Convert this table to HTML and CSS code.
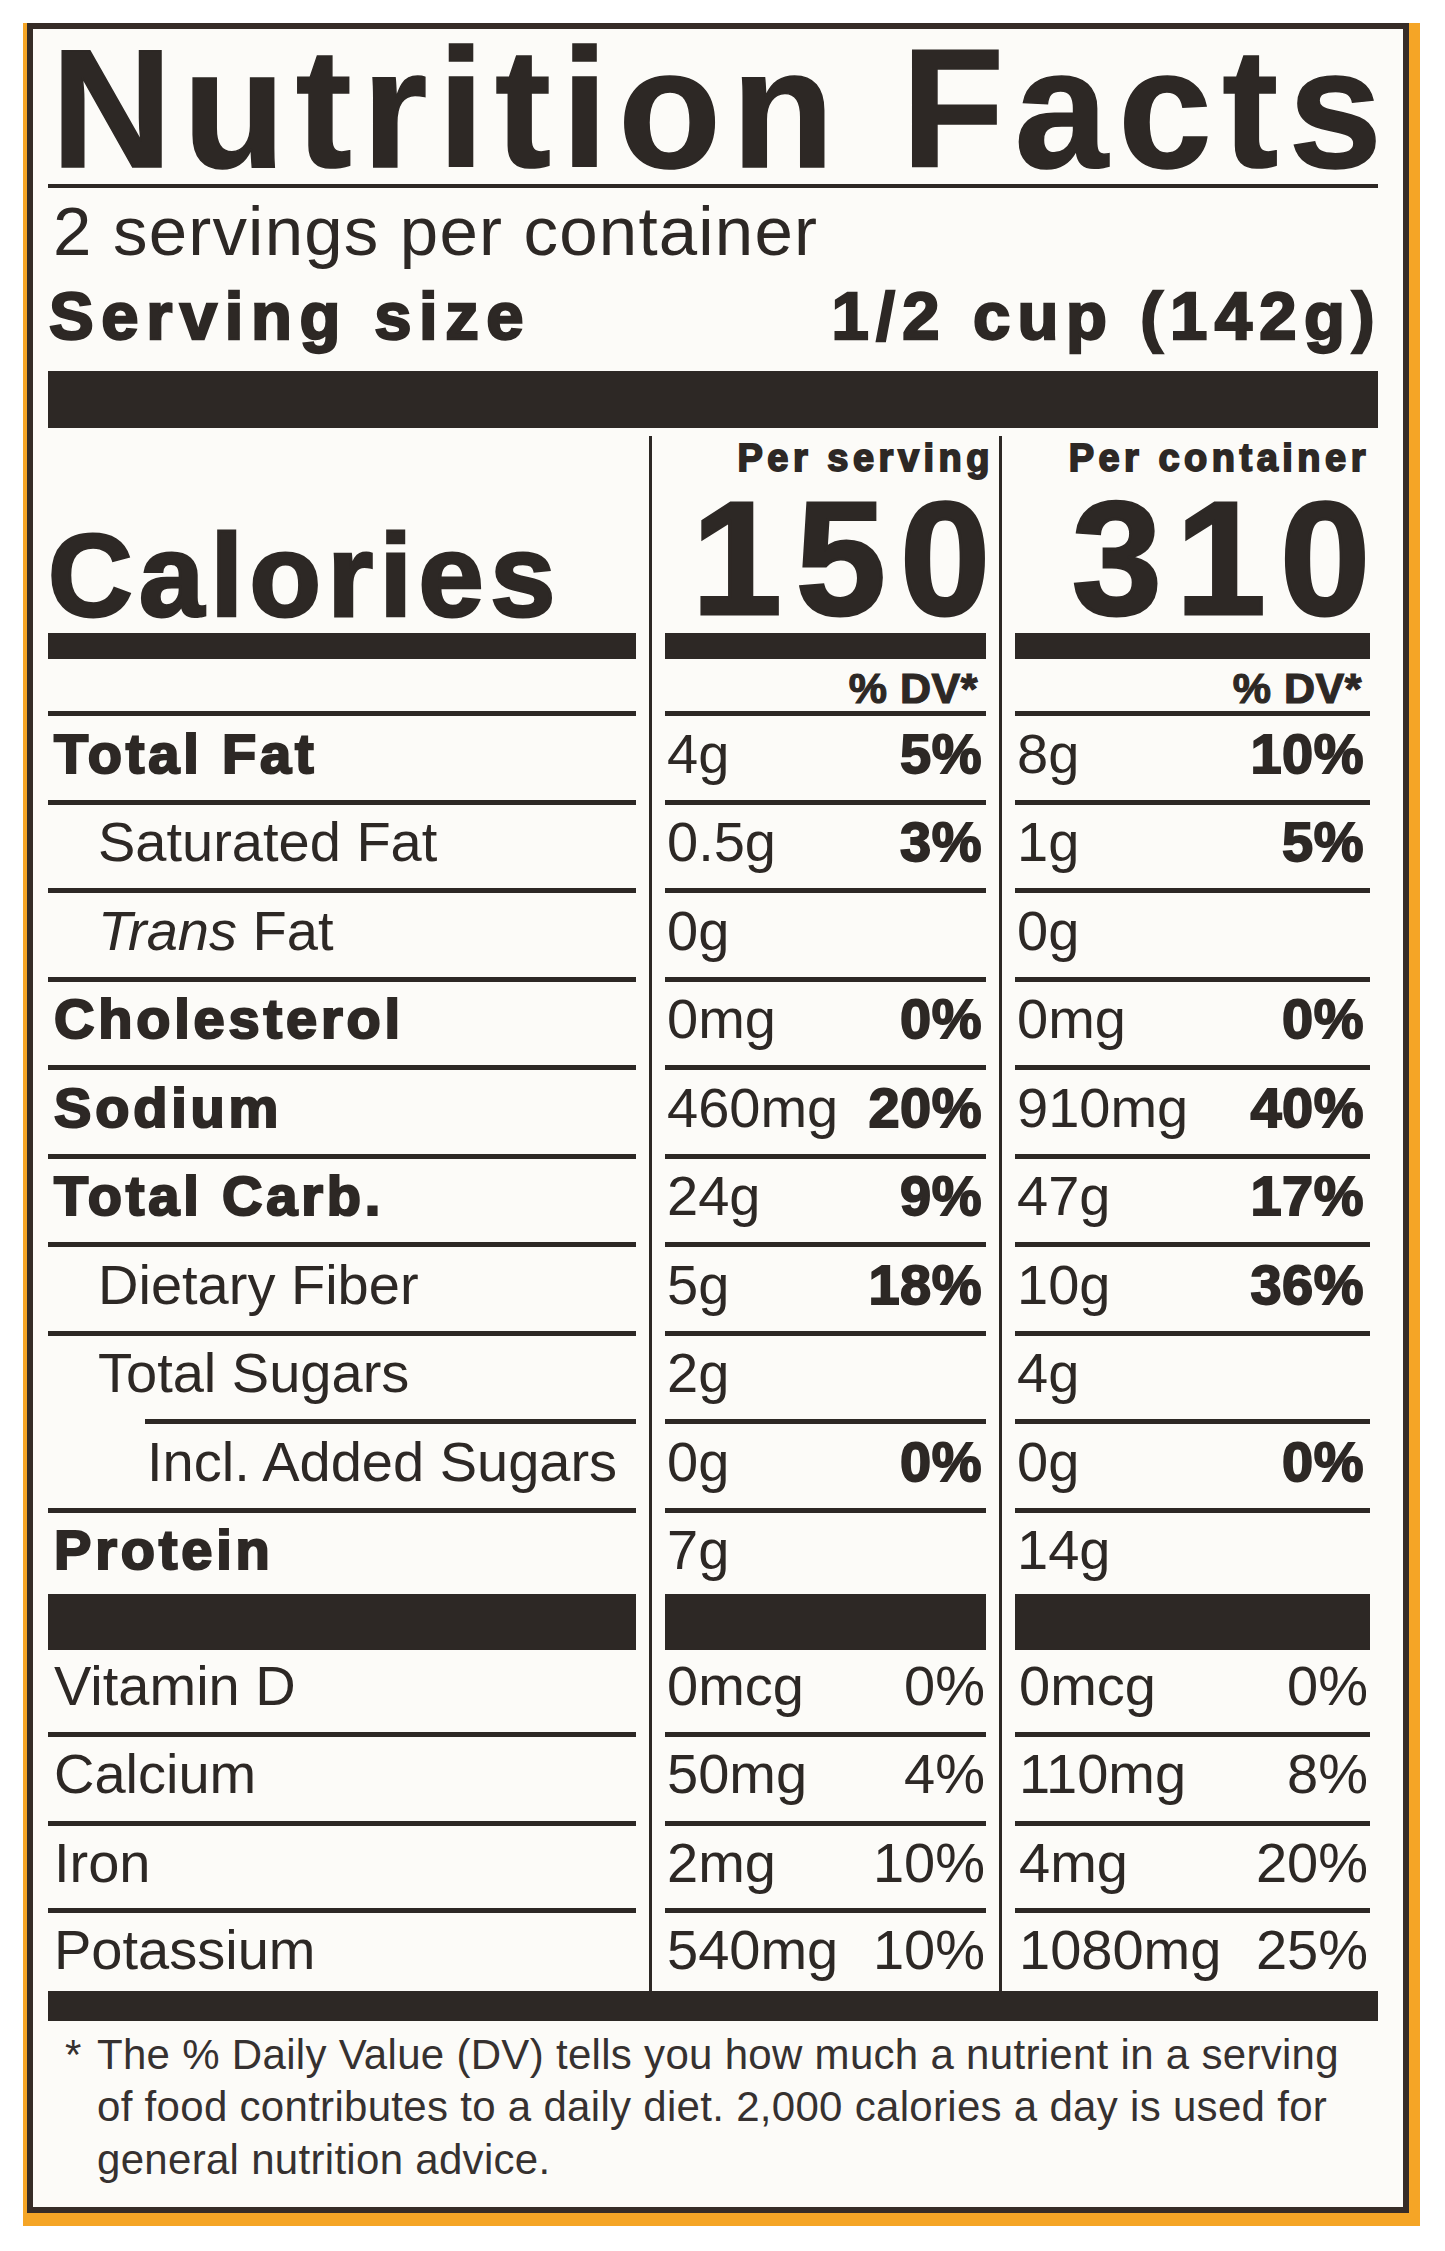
FILE: index.html
```html
<!DOCTYPE html>
<html lang="en">
<head>
<meta charset="utf-8">
<title>Nutrition Facts</title>
<link rel="stylesheet" href="styles.css">
</head>
<body>
<div class="bag">
  <div class="label">
    <h1 class="title">Nutrition Facts</h1>
    <p class="servings">2 servings per container</p>
    <div class="serving-size"><span class="ss-label">Serving size</span><span class="ss-value">1/2 cup (142g)</span></div>
    <div class="bar-top"></div>

    <div class="facts">
      <div class="divider d1"></div>
      <div class="divider d2"></div>

      <div class="c1 head-cal"><span class="calories">Calories</span></div>
      <div class="c2 head"><span class="per">Per serving</span><span class="kcal">150</span></div>
      <div class="c3 head"><span class="per">Per container</span><span class="kcal">310</span></div>

      <div class="c1 calbar"></div>
      <div class="c2 calbar"></div>
      <div class="c3 calbar"></div>

      <div class="c1 dvrow"></div>
      <div class="c2 dvrow"><span class="dv">% DV*</span></div>
      <div class="c3 dvrow"><span class="dv">% DV*</span></div>

      <div class="c1 row lab bold">Total Fat</div>
      <div class="c2 row val"><span>4g</span><b>5%</b></div>
      <div class="c3 row val"><span>8g</span><b>10%</b></div>

      <div class="c1 row lab sub">Saturated Fat</div>
      <div class="c2 row val"><span>0.5g</span><b>3%</b></div>
      <div class="c3 row val"><span>1g</span><b>5%</b></div>

      <div class="c1 row lab sub"><i>Trans</i> Fat</div>
      <div class="c2 row val"><span>0g</span></div>
      <div class="c3 row val"><span>0g</span></div>

      <div class="c1 row lab bold">Cholesterol</div>
      <div class="c2 row val"><span>0mg</span><b>0%</b></div>
      <div class="c3 row val"><span>0mg</span><b>0%</b></div>

      <div class="c1 row lab bold">Sodium</div>
      <div class="c2 row val"><span>460mg</span><b>20%</b></div>
      <div class="c3 row val"><span>910mg</span><b>40%</b></div>

      <div class="c1 row lab bold">Total Carb.</div>
      <div class="c2 row val"><span>24g</span><b>9%</b></div>
      <div class="c3 row val"><span>47g</span><b>17%</b></div>

      <div class="c1 row lab sub">Dietary Fiber</div>
      <div class="c2 row val"><span>5g</span><b>18%</b></div>
      <div class="c3 row val"><span>10g</span><b>36%</b></div>

      <div class="c1 row lab sub">Total Sugars</div>
      <div class="c2 row val"><span>2g</span></div>
      <div class="c3 row val"><span>4g</span></div>

      <div class="c1 row lab incl">Incl. Added Sugars</div>
      <div class="c2 row val"><span>0g</span><b>0%</b></div>
      <div class="c3 row val"><span>0g</span><b>0%</b></div>

      <div class="c1 row lab bold protein">Protein</div>
      <div class="c2 row val protein"><span>7g</span></div>
      <div class="c3 row val protein"><span>14g</span></div>

      <div class="c1 vitbar"></div>
      <div class="c2 vitbar"></div>
      <div class="c3 vitbar"></div>

      <div class="c1 row lab first r-vd">Vitamin D</div>
      <div class="c2 row val low first r-vd"><span>0mcg</span><span>0%</span></div>
      <div class="c3 row val low first r-vd"><span>0mcg</span><span>0%</span></div>

      <div class="c1 row lab r-ca">Calcium</div>
      <div class="c2 row val low r-ca"><span>50mg</span><span>4%</span></div>
      <div class="c3 row val low r-ca"><span>110mg</span><span>8%</span></div>

      <div class="c1 row lab r-fe">Iron</div>
      <div class="c2 row val low r-fe"><span>2mg</span><span>10%</span></div>
      <div class="c3 row val low r-fe"><span>4mg</span><span>20%</span></div>

      <div class="c1 row lab r-k">Potassium</div>
      <div class="c2 row val low r-k"><span>540mg</span><span>10%</span></div>
      <div class="c3 row val low r-k"><span>1080mg</span><span>25%</span></div>
    </div>

    <div class="bar-bottom"></div>
    <p class="footnote"><span class="star">*</span>The % Daily Value (DV) tells you how much a nutrient in a serving<br>of food contributes to a daily diet. 2,000 calories a day is used for<br>general nutrition advice.</p>
  </div>
</div>
</body>
</html>
```

FILE: styles.css
```css
html, body {
  margin: 0;
  padding: 0;
  background: #ffffff;
}

body {
  width: 1445px;
  height: 2251px;
  overflow: hidden;
  font-family: "Liberation Sans", Arial, Helvetica, sans-serif;
  color: #2d2825;
}

.bag {
  box-sizing: border-box;
  margin: 23px 0 0 23px;
  width: 1397px;
  height: 2203px;
  padding: 0 11px 13px 4px;
  background: #f5a526;
}

.label {
  box-sizing: border-box;
  height: 100%;
  border: 6px solid #362c27;
  background: #fcfbf8;
  padding: 0 25px 0 15px;
}

.title {
  margin: 5px 0 0 0;
  padding-left: 3px;
  height: 150px;
  font-size: 168px;
  line-height: 150px;
  font-weight: 700;
  letter-spacing: 10.4px;
  white-space: nowrap;
  border-bottom: 4px solid #2d2825;
  -webkit-text-stroke: 1.5px #2d2825;
}

.servings {
  margin: 9px 0 0 0;
  padding-left: 5px;
  font-size: 69px;
  line-height: 69px;
  letter-spacing: 1.2px;
  white-space: nowrap;
}

.serving-size {
  margin-top: 16px;
  display: flex;
  justify-content: space-between;
  font-size: 67px;
  line-height: 67px;
  font-weight: 700;
  white-space: nowrap;
  -webkit-text-stroke: 2.4px #2d2825;
}

.ss-label {
  padding-left: 1px;
  letter-spacing: 7.6px;
}

.ss-value {
  letter-spacing: 7.4px;
  margin-right: -4px;
}

.bar-top {
  margin-top: 22px;
  height: 57px;
  background: #2d2825;
}

.facts {
  display: grid;
  grid-template-columns: 588px 29px 321px 29px 355px;
}

.c1 { grid-column: 1; }
.c2 { grid-column: 3; }
.c3 { grid-column: 5; }

.divider {
  grid-row: 1 / 19;
  justify-self: center;
  width: 3px;
  margin-top: 8px;
  background: #2d2825;
}
.d1 { grid-column: 2; }
.d2 { grid-column: 4; }

/* header */
.head-cal {
  box-sizing: border-box;
  height: 205px;
  padding-top: 90px;
}

.calories {
  display: block;
  font-size: 117px;
  line-height: 116px;
  font-weight: 700;
  letter-spacing: 6.5px;
  white-space: nowrap;
  -webkit-text-stroke: 3px #2d2825;
}

.head {
  box-sizing: border-box;
  height: 205px;
  padding-top: 11px;
  display: flex;
  flex-direction: column;
  align-items: flex-end;
}

.per {
  font-size: 38px;
  line-height: 38px;
  font-weight: 700;
  letter-spacing: 4.5px;
  white-space: nowrap;
  -webkit-text-stroke: 1.8px #2d2825;
}
.c2 .per { margin-right: -8px; }
.c3 .per { margin-right: 0; }

.kcal {
  margin-top: 6px;
  font-size: 162px;
  line-height: 150px;
  font-weight: 700;
  letter-spacing: 14px;
  -webkit-text-stroke: 3px #2d2825;
}
.c2 .kcal { margin-right: -18px; }
.c3 .kcal { margin-right: -14px; }

.calbar {
  height: 26px;
  background: #2d2825;
}

.dvrow {
  box-sizing: border-box;
  height: 52px;
  padding: 8px 8px 0 0;
  text-align: right;
}

.dv {
  font-size: 43px;
  line-height: 43px;
  font-weight: 700;
  letter-spacing: 0.5px;
  -webkit-text-stroke: 1.2px #2d2825;
}

/* nutrient rows */
.row {
  box-sizing: border-box;
  height: 88.5px;
  border-top: 5px solid #2d2825;
  padding-top: 9.5px;
  font-size: 56px;
  line-height: 56px;
  white-space: nowrap;
}

.lab { padding-left: 6px; }
.lab.bold {
  font-weight: 700;
  letter-spacing: 3.8px;
  -webkit-text-stroke: 2.2px #2d2825;
}
.lab.sub { padding-left: 50px; }
.lab.incl {
  margin-left: 97px;
  padding-left: 2px;
}

.val {
  display: flex;
  justify-content: space-between;
}
.c2.val { padding-left: 2px; padding-right: 4px; }
.c3.val { padding-left: 2px; padding-right: 6px; }
.c2.val.low { padding-right: 1px; }
.c3.val.low { padding-left: 4px; padding-right: 2px; }

.val b {
  font-weight: 700;
  letter-spacing: 0.5px;
  -webkit-text-stroke: 1.8px #2d2825;
}

.row.protein { height: 86px; }

.vitbar {
  height: 56px;
  background: #2d2825;
}

.row.first {
  border-top: 0;
  height: 82px;
  padding-top: 8px;
}
.row.r-ca { height: 89px; }
.row.r-fe { height: 87px; }
.row.r-k { height: 83px; }

.bar-bottom {
  height: 30px;
  background: #2d2825;
}

.footnote {
  margin: 8px 0 0 0;
  padding-left: 49px;
  font-size: 42px;
  line-height: 52.5px;
  letter-spacing: 0.3px;
  color: #363130;
  white-space: nowrap;
}

.star {
  display: inline-block;
  width: 32px;
  margin-left: -32px;
}
```
